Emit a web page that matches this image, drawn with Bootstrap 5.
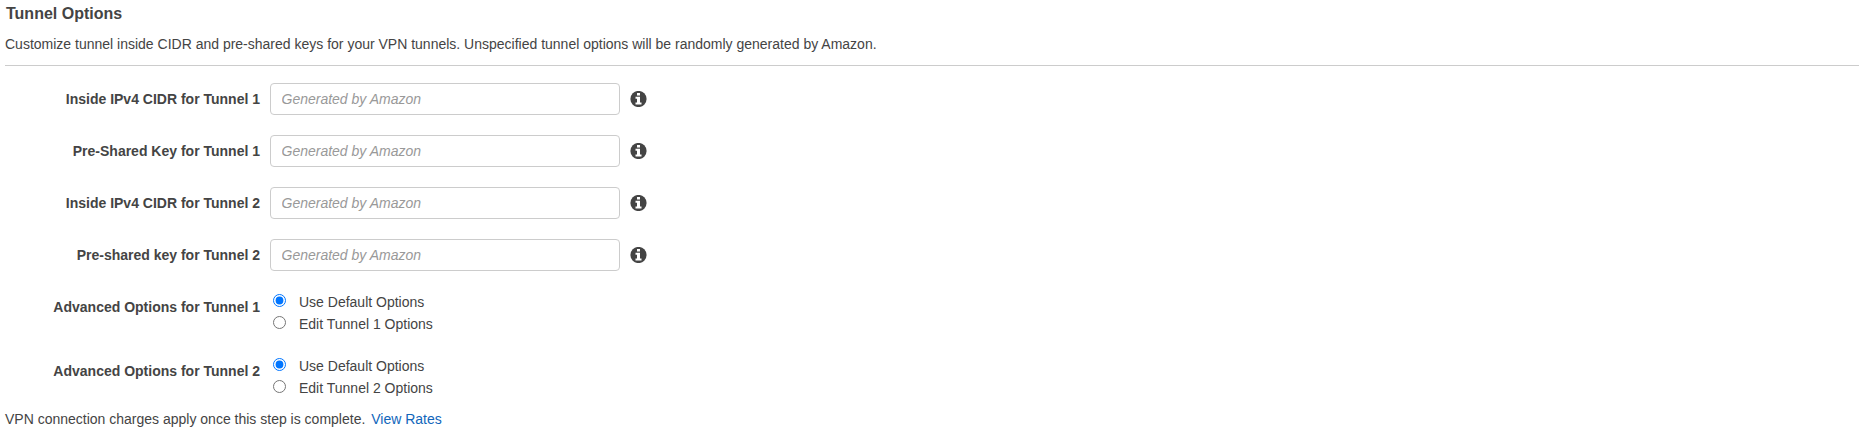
<!DOCTYPE html>
<html lang="en">
<head>
<meta charset="utf-8">
<meta name="viewport" content="width=device-width, initial-scale=1">
<title>Tunnel Options</title>
<link href="https://cdn.jsdelivr.net/npm/bootstrap@5.3.0/dist/css/bootstrap.min.css" rel="stylesheet">
<style>
  body { font: 14px/20px "Liberation Sans", Arial, sans-serif; color: #444; background: #fff; }
  .page { padding: 4px 0 0 5px; }
  .page h1 { font-size: 16px; line-height: 20px; padding-left: 1px; margin-bottom: 10px; }
  .intro { padding-bottom: 11px; border-bottom: 1px solid #ccc; margin-bottom: 17px; }
  .field { margin-bottom: 20px; }
  .field-label { width: 255px; margin-right: 10px; }
  .field .form-control { width: 350px; height: 32px; padding: 0 10.5px; font-size: 14px; line-height: 20px; border: 1px solid #ccc; border-radius: 4px; }
  .form-control::placeholder { color: #999; font-style: italic; }
  .info { width: 17px; height: 16px; margin-left: 9.5px; }
  .radio-label { padding-top: 6px; }
  .choice { height: 22px; line-height: 22px; }
  .choice input { width: 13px; height: 13px; margin: 3px 13px 0 3px; accent-color: #0075ff; }
  .charges { margin-top: -10px; }
  .charges a { color: #1166bb; margin-left: 2px; }
</style>
</head>
<body>
<svg class="d-none" xmlns="http://www.w3.org/2000/svg">
  <symbol id="info" viewBox="0 0 17 16">
    <circle cx="8.5" cy="8" r="8.1" fill="#444"/>
    <path d="M7 2h3v2.5H7zM5.5 5.8H10v5.7h1.5v2h-6v-2H7V7.8H5.5z" fill="#fff"/>
  </symbol>
</svg>
<main class="page">
  <h1 class="fw-bold">Tunnel Options</h1>
  <p class="intro">Customize tunnel inside CIDR and pre-shared keys for your VPN tunnels. Unspecified tunnel options will be randomly generated by Amazon.</p>
  <form>
    <div class="field d-flex align-items-center">
      <label class="field-label fw-bold text-end" for="cidr1">Inside IPv4 CIDR for Tunnel 1</label>
      <input class="form-control" id="cidr1" type="text" placeholder="Generated by Amazon">
      <svg class="info overflow-visible"><use href="#info"/></svg>
    </div>
    <div class="field d-flex align-items-center">
      <label class="field-label fw-bold text-end" for="key1">Pre-Shared Key for Tunnel 1</label>
      <input class="form-control" id="key1" type="text" placeholder="Generated by Amazon">
      <svg class="info overflow-visible"><use href="#info"/></svg>
    </div>
    <div class="field d-flex align-items-center">
      <label class="field-label fw-bold text-end" for="cidr2">Inside IPv4 CIDR for Tunnel 2</label>
      <input class="form-control" id="cidr2" type="text" placeholder="Generated by Amazon">
      <svg class="info overflow-visible"><use href="#info"/></svg>
    </div>
    <div class="field d-flex align-items-center">
      <label class="field-label fw-bold text-end" for="key2">Pre-shared key for Tunnel 2</label>
      <input class="form-control" id="key2" type="text" placeholder="Generated by Amazon">
      <svg class="info overflow-visible"><use href="#info"/></svg>
    </div>
    <div class="field d-flex align-items-start">
      <div class="field-label radio-label fw-bold text-end">Advanced Options for Tunnel 1</div>
      <div>
        <label class="choice d-flex align-items-start"><input type="radio" name="adv1" checked>Use Default Options</label>
        <label class="choice d-flex align-items-start"><input type="radio" name="adv1">Edit Tunnel 1 Options</label>
      </div>
    </div>
    <div class="field d-flex align-items-start">
      <div class="field-label radio-label fw-bold text-end">Advanced Options for Tunnel 2</div>
      <div>
        <label class="choice d-flex align-items-start"><input type="radio" name="adv2" checked>Use Default Options</label>
        <label class="choice d-flex align-items-start"><input type="radio" name="adv2">Edit Tunnel 2 Options</label>
      </div>
    </div>
  </form>
  <p class="charges mb-0">VPN connection charges apply once this step is complete. <a class="text-decoration-none" href="#">View Rates</a></p>
</main>
<script src="https://cdn.jsdelivr.net/npm/bootstrap@5.3.0/dist/js/bootstrap.bundle.min.js"></script>
</body>
</html>
